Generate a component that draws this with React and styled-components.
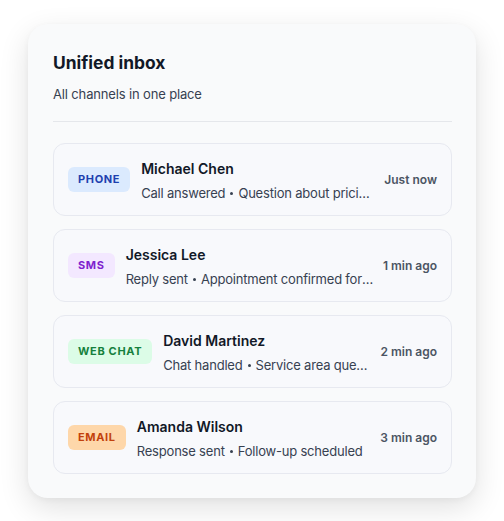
import React from 'react';
import styled, { createGlobalStyle } from 'styled-components';

const GlobalStyle = createGlobalStyle`
  * { box-sizing: border-box; }
  body {
    margin: 0;
    background: #ffffff;
    font-family: Inter, "Noto Sans", sans-serif;
    -webkit-font-smoothing: antialiased;
  }
`;

const channels = {
  phone: { label: 'PHONE', bg: '#dbeafe', color: '#1e40af' },
  sms: { label: 'SMS', bg: '#f3e8ff', color: '#7e22ce' },
  web: { label: 'WEB CHAT', bg: '#dcfce7', color: '#15803d' },
  email: { label: 'EMAIL', bg: '#fed7aa', color: '#c2410c' },
};

const messages = [
  { channel: 'phone', name: 'Michael Chen', action: 'Call answered', note: 'Question about pricing and availability', time: 'Just now' },
  { channel: 'sms', name: 'Jessica Lee', action: 'Reply sent', note: 'Appointment confirmed for Thursday', time: '1 min ago' },
  { channel: 'web', name: 'David Martinez', action: 'Chat handled', note: 'Service area question', time: '2 min ago' },
  { channel: 'email', name: 'Amanda Wilson', action: 'Response sent', note: 'Follow-up scheduled', time: '3 min ago' },
];

function App() {
  return (
    <Page>
      <GlobalStyle />
      <Card>
        <Title>Unified inbox</Title>
        <Subtitle>All channels in one place</Subtitle>
        <Divider />
        <List>
          {messages.map((m) => {
            const c = channels[m.channel];
            return (
              <Item key={m.name}>
                <Badge $bg={c.bg} $color={c.color}>{c.label}</Badge>
                <Body>
                  <Name>{m.name}</Name>
                  <Detail>{m.action}<Dot />{m.note}</Detail>
                </Body>
                <Time>{m.time}</Time>
              </Item>
            );
          })}
        </List>
      </Card>
    </Page>
  );
}

export default App;

const Page = styled.div`
  padding: 24px 28px;
`;

const Card = styled.div`
  width: 448px;
  background: #f9fafb;
  border-radius: 20px;
  padding: 26px 24px 24px 25px;
  box-shadow: 0 10px 30px rgba(0, 0, 0, 0.12), 0 2px 6px rgba(0, 0, 0, 0.04);
`;

const Title = styled.h2`
  margin: 0;
  font-size: 17.4px;
  line-height: 26px;
  font-weight: 700;
  color: #111827;
`;

const Subtitle = styled.p`
  margin: 9px 0 0;
  font-size: 13px;
  line-height: 18px;
  letter-spacing: -0.15px;
  color: #374151;
`;

const Divider = styled.div`
  height: 1px;
  background: #e5e7eb;
  margin: 18px 0 21px;
`;

const List = styled.div`
  display: flex;
  flex-direction: column;
  gap: 13px;
`;

const Item = styled.div`
  display: flex;
  align-items: center;
  gap: 8px;
  height: 73px;
  padding: 2px 14px 0;
  background: #f8f9fc;
  border: 1px solid #e7e9f0;
  border-radius: 12px;
`;

const Badge = styled.span`
  flex: none;
  margin: -2px 3px 0 0;
  padding: 0 10px;
  height: 25px;
  line-height: 25px;
  border-radius: 6px;
  background: ${(p) => p.$bg};
  color: ${(p) => p.$color};
  font-size: 11px;
  font-weight: 700;
  letter-spacing: 0.06em;
`;

const Body = styled.div`
  flex: 1;
  min-width: 0;
  display: flex;
  flex-direction: column;
  gap: 4px;
`;

const Name = styled.div`
  font-size: 14px;
  line-height: 20px;
  font-weight: 600;
  color: #111827;
`;

const Detail = styled.div`
  font-size: 13px;
  line-height: 20px;
  letter-spacing: -0.2px;
  color: #374151;
  white-space: nowrap;
  overflow: hidden;
  text-overflow: ellipsis;
`;

const Dot = styled.span`
  display: inline-block;
  width: 3px;
  height: 3px;
  border-radius: 50%;
  background: currentColor;
  vertical-align: middle;
  margin: 0 5px;
`;

const Time = styled.div`
  flex: none;
  margin-top: -2px;
  font-size: 12px;
  font-weight: 600;
  color: #4b5563;
`;
